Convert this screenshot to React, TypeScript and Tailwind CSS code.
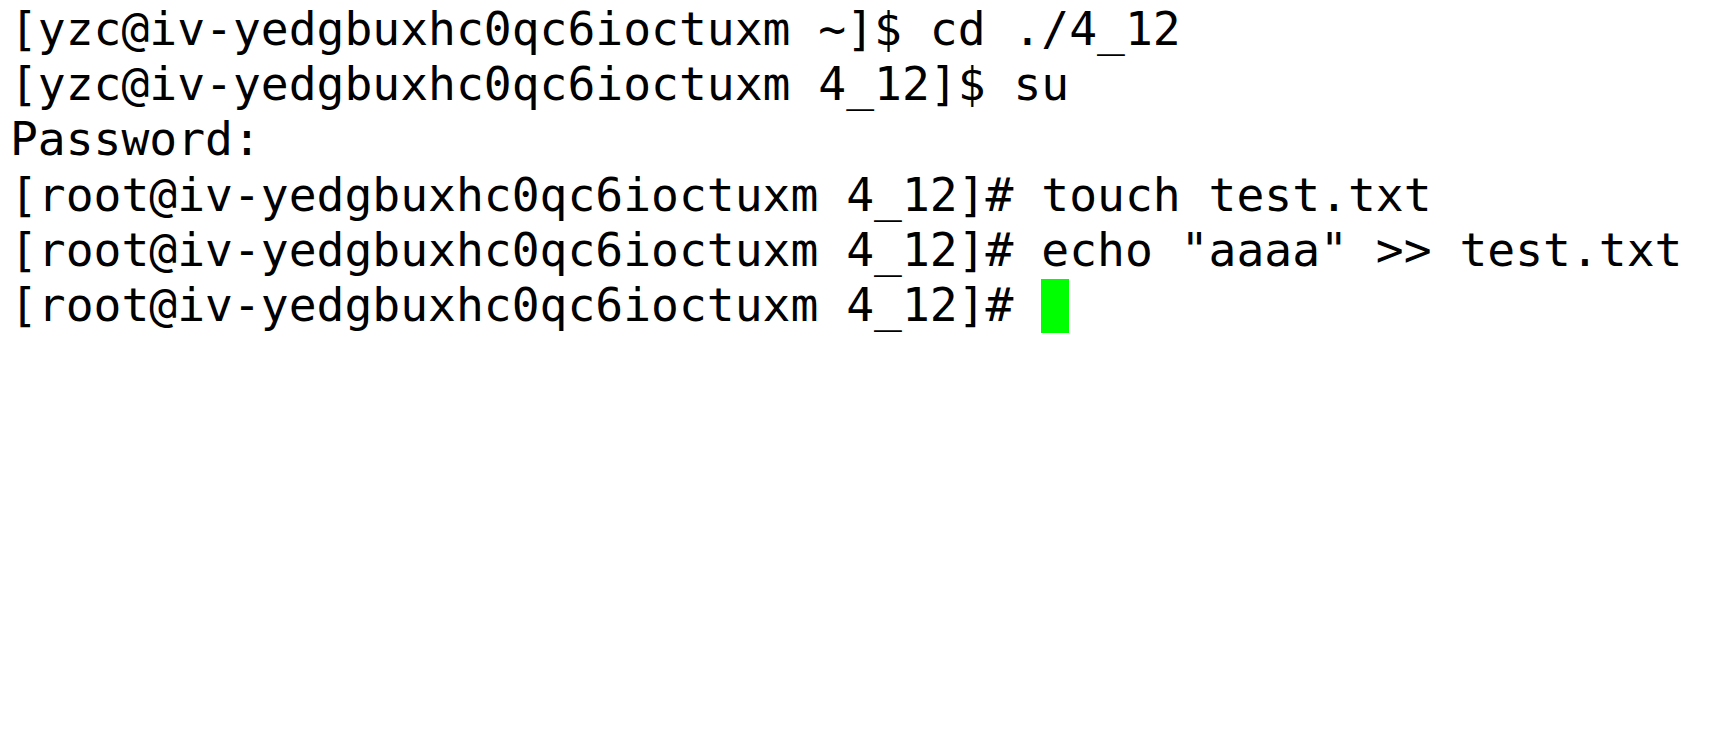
import React from "react";

const lines: string[] = [
  "[yzc@iv-yedgbuxhc0qc6ioctuxm ~]$ cd ./4_12",
  "[yzc@iv-yedgbuxhc0qc6ioctuxm 4_12]$ su",
  "Password:",
  "[root@iv-yedgbuxhc0qc6ioctuxm 4_12]# touch test.txt",
  '[root@iv-yedgbuxhc0qc6ioctuxm 4_12]# echo "aaaa" >> test.txt',
];

export default function App() {
  return (
    <div className="w-[1731px] h-[747px] bg-white overflow-hidden">
      <div
        className="pl-[10px] pt-[2px] text-black text-[46.3px] leading-[55.2px] whitespace-pre"
        style={{ fontFamily: '"DejaVu Sans Mono", monospace' }}
      >
        {lines.map((l, i) => (
          <div key={i}>{l}</div>
        ))}
        <div className="flex items-center">
          <span>[root@iv-yedgbuxhc0qc6ioctuxm 4_12]# </span>
          <span className="inline-block w-[28px] h-[54px] bg-[#00ff00]" />
        </div>
      </div>
    </div>
  );
}
